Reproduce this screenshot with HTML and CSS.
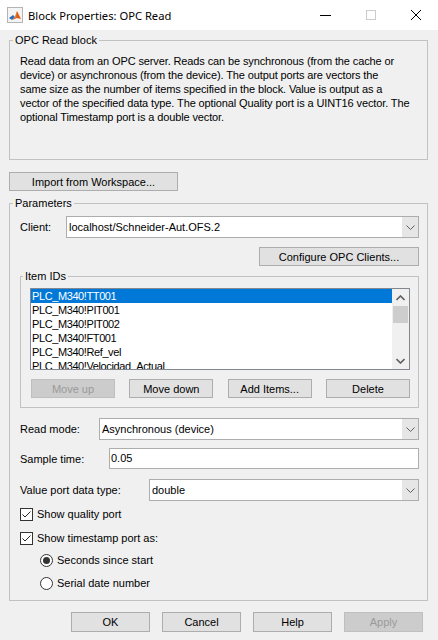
FILE: index.html
```html
<!DOCTYPE html>
<html>
<head>
<meta charset="utf-8">
<title>Block Properties: OPC Read</title>
<link rel="stylesheet" href="styles.css">
</head>
<body>
<div class="window">
  <div class="titlebar">
    <svg class="app-icon" width="16" height="16" viewBox="0 0 16 16">
      <rect x="0.5" y="0.5" width="15" height="15" fill="#f4f4f4" stroke="#b4b4b4"/>
      <polygon points="2,11 6,8 8,10 5,13" fill="#2a6cc0"/>
      <polygon points="5,13 8,10 10,4 12,8 14,12 10,11" fill="#e05a10"/>
      <polygon points="8,10 10,4 9,11" fill="#f09030"/>
    </svg>
    <span class="title">Block Properties: OPC Read</span>
    <div class="caption-btns">
      <span class="cap"><svg width="12" height="12" viewBox="0 0 12 12"><line x1="0" y1="6.5" x2="11" y2="6.5" stroke="#000"/></svg></span>
      <span class="cap"><svg width="12" height="12" viewBox="0 0 12 12"><rect x="1.5" y="1.5" width="9" height="9" fill="none" stroke="#cccccc"/></svg></span>
      <span class="cap"><svg width="12" height="12" viewBox="0 0 12 12"><path d="M1 1 L11 11 M11 1 L1 11" stroke="#000" stroke-width="1"/></svg></span>
    </div>
  </div>

  <div class="content">
    <fieldset class="group desc-group">
      <legend>OPC Read block</legend>
      <p class="desc">Read data from an OPC server. Reads can be synchronous (from the cache or<br>device) or asynchronous (from the device). The output ports are vectors the<br>same size as the number of items specified in the block. Value is output as a<br>vector of the specified data type. The optional Quality port is a UINT16 vector. The<br>optional Timestamp port is a double vector.</p>
    </fieldset>

    <button class="btn import-btn">Import from Workspace...</button>

    <fieldset class="group params">
      <legend>Parameters</legend>

      <div class="row row-client">
        <span class="lbl lbl-client">Client:</span>
        <div class="combo">
          <span class="combo-text">localhost/Schneider-Aut.OFS.2</span>
          <span class="combo-arrow"><svg width="9" height="5" viewBox="0 0 9 5"><path d="M0.5 0.5 L4.5 4.5 L8.5 0.5" fill="none" stroke="#606060"/></svg></span>
        </div>
      </div>

      <div class="config-row">
        <button class="btn config-btn">Configure OPC Clients...</button>
      </div>

      <fieldset class="group items">
        <legend>Item IDs</legend>
        <div class="listbox">
          <ul class="list">
            <li class="selected">PLC_M340!TT001</li>
            <li>PLC_M340!PIT001</li>
            <li>PLC_M340!PIT002</li>
            <li>PLC_M340!FT001</li>
            <li>PLC_M340!Ref_vel</li>
            <li>PLC_M340!Velocidad_Actual</li>
          </ul>
          <div class="scrollbar">
            <span class="sb-btn"><svg width="9" height="6" viewBox="0 0 9 6"><path d="M0.5 5 L4.5 1 L8.5 5" fill="none" stroke="#606060" stroke-width="1.6"/></svg></span>
            <span class="sb-track"><span class="sb-thumb"></span></span>
            <span class="sb-btn"><svg width="9" height="6" viewBox="0 0 9 6"><path d="M0.5 1 L4.5 5 L8.5 1" fill="none" stroke="#606060" stroke-width="1.6"/></svg></span>
          </div>
        </div>
        <div class="item-btns">
          <button class="btn item-btn" disabled>Move up</button>
          <button class="btn item-btn">Move down</button>
          <button class="btn item-btn">Add Items...</button>
          <button class="btn item-btn">Delete</button>
        </div>
      </fieldset>

      <div class="row row-read">
        <span class="lbl lbl-read">Read mode:</span>
        <div class="combo">
          <span class="combo-text">Asynchronous (device)</span>
          <span class="combo-arrow"><svg width="9" height="5" viewBox="0 0 9 5"><path d="M0.5 0.5 L4.5 4.5 L8.5 0.5" fill="none" stroke="#606060"/></svg></span>
        </div>
      </div>

      <div class="row row-sample">
        <span class="lbl lbl-sample">Sample time:</span>
        <div class="textfield">0.05</div>
      </div>

      <div class="row row-type">
        <span class="lbl lbl-type">Value port data type:</span>
        <div class="combo">
          <span class="combo-text">double</span>
          <span class="combo-arrow"><svg width="9" height="5" viewBox="0 0 9 5"><path d="M0.5 0.5 L4.5 4.5 L8.5 0.5" fill="none" stroke="#606060"/></svg></span>
        </div>
      </div>

      <div class="check-row check-quality">
        <svg class="checkbox" width="13" height="13" viewBox="0 0 13 13"><rect x="0.5" y="0.5" width="12" height="12" fill="#fff" stroke="#333"/><path d="M2.5 6.5 L5 9 L10.5 3.5" fill="none" stroke="#222" stroke-width="1"/></svg>
        <span>Show quality port</span>
      </div>
      <div class="check-row check-time">
        <svg class="checkbox" width="13" height="13" viewBox="0 0 13 13"><rect x="0.5" y="0.5" width="12" height="12" fill="#fff" stroke="#333"/><path d="M2.5 6.5 L5 9 L10.5 3.5" fill="none" stroke="#222" stroke-width="1"/></svg>
        <span>Show timestamp port as:</span>
      </div>
      <div class="radio-row radio-first">
        <svg class="radio" width="13" height="13" viewBox="0 0 13 13"><circle cx="6.5" cy="6.5" r="6" fill="#fff" stroke="#333"/><circle cx="6.5" cy="6.5" r="3.5" fill="#333"/></svg>
        <span>Seconds since start</span>
      </div>
      <div class="radio-row radio-second">
        <svg class="radio" width="13" height="13" viewBox="0 0 13 13"><circle cx="6.5" cy="6.5" r="6" fill="#fff" stroke="#333"/></svg>
        <span>Serial date number</span>
      </div>
    </fieldset>

    <div class="dialog-btns">
      <button class="btn dlg-btn">OK</button>
      <button class="btn dlg-btn">Cancel</button>
      <button class="btn dlg-btn">Help</button>
      <button class="btn dlg-btn" disabled>Apply</button>
    </div>
  </div>
</div>
</body>
</html>
```

FILE: styles.css
```css
* { box-sizing: border-box; }
html, body { margin: 0; padding: 0; }
body {
  width: 438px;
  height: 640px;
  overflow: hidden;
  background: #f0f0f0;
  font-family: "Liberation Sans", Arial, sans-serif;
  font-size: 11px;
  color: #000;
}
.window { width: 438px; height: 640px; background: #f0f0f0; }

/* Title bar */
.titlebar {
  height: 30px;
  background: #fff;
  display: flex;
  align-items: center;
}
.app-icon { margin-left: 7px; margin-right: 5px; flex: none; }
.title {
  flex: 1;
  font-family: "Noto Sans", "Open Sans", sans-serif;
  font-size: 11.2px;
  color: #000;
  white-space: nowrap;
}
.caption-btns { display: flex; }
.cap {
  width: 45px;
  height: 30px;
  display: flex;
  align-items: center;
  justify-content: center;
}

/* Content */
.content { padding: 3px 10px 0 9px; }

.group {
  margin: 0;
  min-width: 0;
  border: 1px solid #c2c2c2;
}
.group > legend {
  margin-left: -7px;
  padding: 0 2px;
  line-height: 14px;
  height: 14px;
}

.desc-group { padding: 7px 10px 35px 10px; }
.desc {
  margin: 0;
  line-height: 14px;
  white-space: nowrap;
  letter-spacing: -0.12px;
}

.btn {
  font-family: "Liberation Sans", Arial, sans-serif;
  font-size: 11px;
  color: #000;
  background: #e1e1e1;
  border: 1px solid #adadad;
  padding: 0;
  margin: 0;
  line-height: 16px;
}
.btn:disabled {
  background: #cccccc;
  border-color: #bfbfbf;
  color: #9a9a9a;
}

.import-btn { display: block; margin-top: 12px; width: 169px; height: 19px; }

.params { margin-top: 5px; padding: 6px 8px 9px 10px; }

.row { display: flex; align-items: center; }
.lbl { flex: none; white-space: nowrap; }
.lbl-client { width: 46px; }
.lbl-read { width: 79px; }
.lbl-sample { width: 89px; }
.lbl-type { width: 129px; }

.combo {
  flex: 1;
  height: 22px;
  display: flex;
  background: #fff;
  border: 1px solid #adadad;
}
.combo-text {
  flex: 1;
  padding-left: 2px;
  line-height: 20px;
  white-space: nowrap;
}
.combo-arrow {
  width: 16px;
  background: #e6e6e6;
  display: flex;
  align-items: center;
  justify-content: center;
}

.textfield {
  flex: 1;
  height: 21px;
  background: #fff;
  border: 1px solid #adadad;
  padding-left: 1px;
  line-height: 19px;
}

.row-client { height: 22px; }
.config-row { display: flex; justify-content: flex-end; margin-top: 9px; }
.config-btn { width: 160px; height: 19px; }

.items { margin-top: 3px; padding: 5px 8px 9px 9px; }

.listbox {
  display: flex;
  height: 82px;
  background: #fff;
  border: 1px solid #828790;
}
.list {
  flex: 1;
  list-style: none;
  margin: 0;
  padding: 0;
  overflow: hidden;
}
.list li {
  height: 14px;
  line-height: 14px;
  padding-left: 1px;
  white-space: nowrap;
  letter-spacing: -0.4px;
}
.list li.selected { background: #0078d7; color: #fff; }

.scrollbar {
  width: 17px;
  background: #f0f0f0;
  display: flex;
  flex-direction: column;
}
.sb-btn {
  height: 17px;
  display: flex;
  align-items: center;
  justify-content: center;
}
.sb-track { flex: 1; display: flex; flex-direction: column; align-items: center; }
.sb-thumb { width: 15px; height: 17px; background: #cdcdcd; }

.item-btns {
  display: flex;
  justify-content: space-between;
  margin-top: 9px;
  padding-left: 1px;
}
.item-btn { width: 84px; height: 19px; }

.row-read { margin-top: 10px; height: 22px; }
.row-sample { margin-top: 8px; height: 21px; }
.row-type { margin-top: 10px; height: 22px; }

.check-row, .radio-row {
  display: flex;
  align-items: center;
  height: 16px;
  white-space: nowrap;
}
.checkbox { margin-right: 4px; flex: none; }
.radio { margin-right: 4px; flex: none; }
.check-quality { margin-top: 5px; }
.check-time { margin-top: 8px; }
.radio-row { padding-left: 20px; }
.radio-first { margin-top: 6px; }
.radio-second { margin-top: 7px; }

.dialog-btns {
  display: flex;
  justify-content: flex-end;
  gap: 12px;
  margin-top: 11px;
  margin-right: 5px;
}
.dlg-btn { width: 79px; height: 20px; }
```
